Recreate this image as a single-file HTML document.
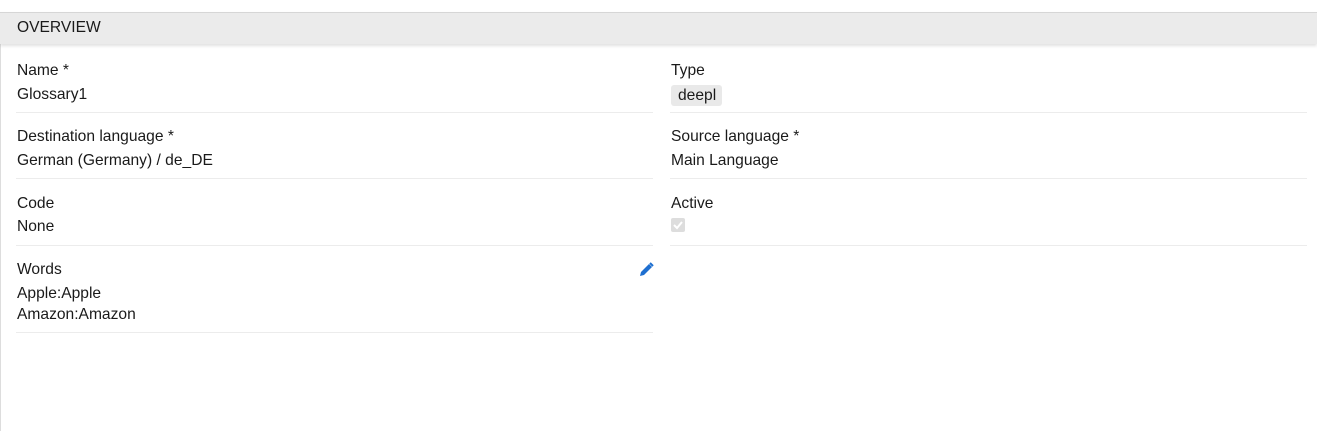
<!DOCTYPE html>
<html><head><style>
*{margin:0;padding:0;box-sizing:border-box}
body{width:1317px;height:431px;background:#fff;font-family:"Liberation Sans",sans-serif;font-size:15.6px;color:#1a1a1a;position:relative;overflow:hidden}
.lb{position:absolute;left:0;top:12px;width:1px;height:419px;background:#ddd}
.hd{position:absolute;left:0;top:12px;width:1317px;height:32px;background:#ebebeb;border-top:1px solid #d6d6d6;box-shadow:0 2px 3px rgba(0,0,0,.12)}
.hd span{position:absolute;left:17px;top:6px}
.t{position:absolute;white-space:nowrap}
.ln{position:absolute;height:1px;background:#ececec}
.tag{position:absolute;left:671px;top:85px;width:51px;height:21px;background:#e9e9e9;border-radius:3px;padding:2px 0 0 7px}
.cb{position:absolute;left:671px;top:218px;width:14px;height:14px;background:#ddd;border-radius:2px}
</style></head><body>
<div class="lb"></div>
<div class="hd"><span>OVERVIEW</span></div>
<div class="t" style="left:17px;top:62px">Name *</div>
<div class="t" style="left:17px;top:86px">Glossary1</div>
<div class="ln" style="left:16px;top:112px;width:637px"></div>
<div class="t" style="left:671px;top:62px">Type</div>
<div class="tag">deepl</div>
<div class="ln" style="left:670px;top:112px;width:637px"></div>

<div class="t" style="left:17px;top:128px">Destination language *</div>
<div class="t" style="left:17px;top:152px">German (Germany) / de_DE</div>
<div class="ln" style="left:16px;top:178px;width:637px"></div>
<div class="t" style="left:671px;top:128px">Source language *</div>
<div class="t" style="left:671px;top:152px">Main Language</div>
<div class="ln" style="left:670px;top:178px;width:637px"></div>

<div class="t" style="left:17px;top:195px">Code</div>
<div class="t" style="left:17px;top:218px">None</div>
<div class="ln" style="left:16px;top:245px;width:637px"></div>
<div class="t" style="left:671px;top:195px">Active</div>
<div class="cb"><svg width="14" height="14" viewBox="0 0 14 14"><path d="M3 7l3 3 5-6" stroke="#fff" stroke-width="2" fill="none"/></svg></div>
<div class="ln" style="left:670px;top:245px;width:637px"></div>

<div class="t" style="left:17px;top:261px">Words</div>
<svg style="position:absolute;left:639px;top:262px" width="15" height="15" viewBox="0 0 15 15"><path d="M1 14l1-4 8-8 3 3-8 8z" fill="#1e6fd0"/><path d="M11 1l3 3" stroke="#1e6fd0" stroke-width="2"/></svg>
<div class="t" style="left:17px;top:285px">Apple:Apple</div>
<div class="t" style="left:17px;top:306px">Amazon:Amazon</div>
<div class="ln" style="left:16px;top:332px;width:637px"></div>
</body></html>
